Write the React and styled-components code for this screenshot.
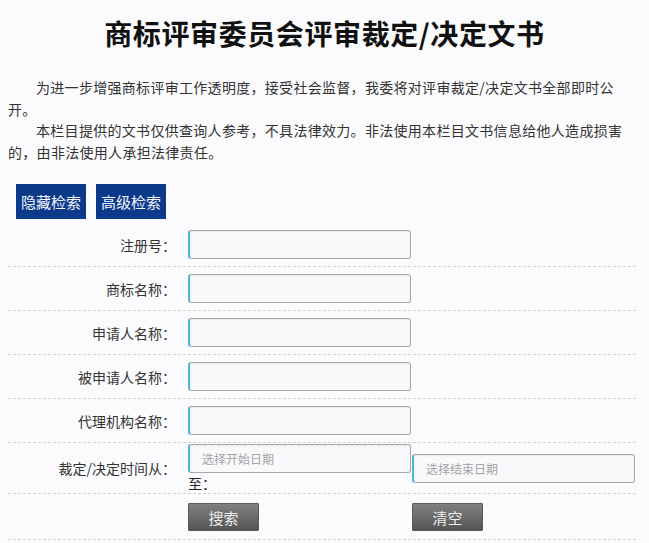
import React from "react";
import styled, { createGlobalStyle } from "styled-components";

const GlobalStyle = createGlobalStyle`
  html, body {
    margin: 0;
    padding: 0;
    background: #fbfbfd;
  }
  body {
    font-family: "Noto Sans CJK SC", "Noto Sans", sans-serif;
    color: #333;
  }
`;

const Page = styled.div`
  width: 649px;
  padding: 0 8px;
  box-sizing: border-box;
`;

const Title = styled.h1`
  margin: 13px 0 0;
  font-size: 28px;
  line-height: 40px;
  font-weight: 700;
  letter-spacing: 0.6px;
  text-align: center;
  color: #111;
`;

const Intro = styled.div`
  width: 616px;
  margin-top: 24px;
  font-size: 14px;
  line-height: 21.5px;
  letter-spacing: 0.3px;
  color: #333;
`;

const Para = styled.p`
  margin: 0;
  text-indent: 2em;
`;

const Toolbar = styled.div`
  display: flex;
  gap: 10px;
  padding-left: 8px;
  margin-top: 21px;
  margin-bottom: 4px;
`;

const BlueButton = styled.button`
  width: 70px;
  height: 35px;
  padding: 0;
  border: none;
  background: #0c3a8b;
  color: #f4f6fb;
  font-family: inherit;
  font-size: 15px;
  cursor: pointer;
`;

const Form = styled.div`
  width: 628px;
`;

const Row = styled.div`
  display: grid;
  grid-template-columns: 168px 1fr;
  column-gap: 12px;
  align-items: center;
  padding: ${p => (p.$tight ? "0" : "7px 0")};
  border-bottom: 1px dashed #d4d4d8;
`;

const Label = styled.div`
  text-align: right;
  font-size: 14px;
  color: #333;
`;

const Input = styled.input`
  width: 223px;
  height: 29px;
  box-sizing: border-box;
  padding: 0 12px;
  border: 1px solid #a8a8ac;
  border-left: 2px solid #4fb4db;
  border-radius: 3px;
  background: #f9f9fb;
  box-shadow: inset 0 1px 2px rgba(0, 0, 0, 0.06);
  font-family: inherit;
  font-size: 12px;
  color: #333;
  outline: none;
  &::placeholder {
    color: #a3a3a6;
  }
`;

const DateGrid = styled.div`
  display: grid;
  grid-template-columns: 223px 223px;
  column-gap: 1px;
  padding-top: 1px;
`;

const EndDate = styled(Input)`
  grid-column: 2;
  grid-row: 1 / span 2;
  align-self: center;
`;

const To = styled.span`
  grid-column: 1;
  font-size: 14px;
  line-height: 20px;
  color: #222;
`;

const Actions = styled.div`
  display: grid;
  grid-template-columns: 224px 224px;
  padding: 9px 0 8px;
`;

const GrayButton = styled.button`
  width: 71px;
  height: 28px;
  padding: 0;
  border: 1px solid #59595c;
  border-radius: 1px;
  background: linear-gradient(#808083, #555558);
  color: #ececec;
  font-family: inherit;
  font-size: 15px;
  cursor: pointer;
`;

const fields = ["注册号：", "商标名称：", "申请人名称：", "被申请人名称：", "代理机构名称："];

export default function App() {
  return (
    <Page>
      <GlobalStyle />
      <Title>商标评审委员会评审裁定/决定文书</Title>
      <Intro>
        <Para>
          为进一步增强商标评审工作透明度，接受社会监督，我委将对评审裁定/决定文书全部即时公开。
        </Para>
        <Para>
          本栏目提供的文书仅供查询人参考，不具法律效力。非法使用本栏目文书信息给他人造成损害的，由非法使用人承担法律责任。
        </Para>
      </Intro>
      <Toolbar>
        <BlueButton>隐藏检索</BlueButton>
        <BlueButton>高级检索</BlueButton>
      </Toolbar>
      <Form>
        {fields.map(label => (
          <Row key={label}>
            <Label>{label}</Label>
            <Input type="text" />
          </Row>
        ))}
        <Row $tight>
          <Label>裁定/决定时间从：</Label>
          <DateGrid>
            <Input type="text" placeholder="选择开始日期" />
            <EndDate type="text" placeholder="选择结束日期" />
            <To>至：</To>
          </DateGrid>
        </Row>
        <Row $tight>
          <span />
          <Actions>
            <GrayButton>搜索</GrayButton>
            <GrayButton>清空</GrayButton>
          </Actions>
        </Row>
      </Form>
    </Page>
  );
}
